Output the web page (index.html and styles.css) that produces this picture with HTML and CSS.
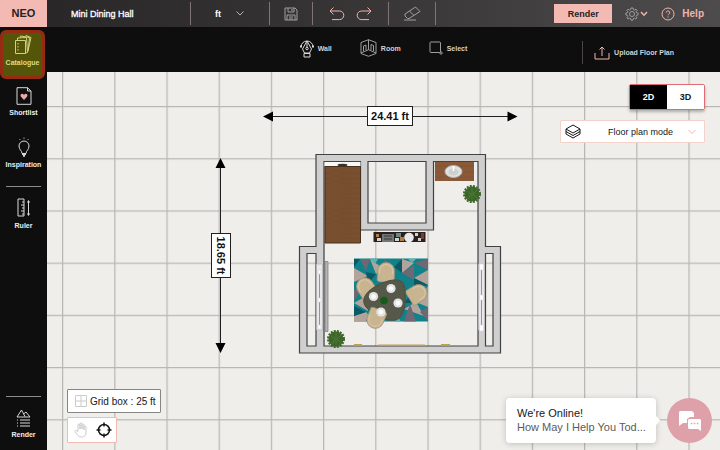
FILE: index.html
```
<!DOCTYPE html>
<html lang="en">
<head>
<meta charset="utf-8">
<title>Mini Dining Hall – NEO</title>
<link rel="stylesheet" href="styles.css">
</head>
<body>
<div class="app">
  <header class="topbar">
    <a class="brand" href="#">NEO</a>
    <h1 class="title">Mini Dining Hall</h1>
    <label class="unit">
      <select aria-label="Unit"><option>ft</option><option>m</option></select>
      <svg class="unit-arrow" width="8" height="5" viewBox="0 0 8 5"><path d="M.5.5 4 4 7.500.5"/></svg>
    </label>
    <div class="group save">
      <button aria-label="Save"><svg width="14" height="14" viewBox="0 0 14 14" class="ln grey"><path d="M1 1h10l2 2v10H1zM4 1v4h6V1M8 2v2M3 13V8h8v5M5 10h4M5 12h4"/></svg></button>
    </div>
    <div class="group history">
      <button aria-label="Undo"><svg width="16" height="14" viewBox="0 0 16 14" class="ln pink"><path d="M4.500.5 1 4l3.500 3.500M1 4h9.500a4.300 4.300 0 0 1 0 8.600H3"/></svg></button>
      <button aria-label="Redo"><svg width="16" height="14" viewBox="0 0 16 14" class="ln pink"><path d="M11.500.5 15 4l-3.500 3.500M15 4H5.500a4.300 4.300 0 0 0 0 8.600H13"/></svg></button>
    </div>
    <div class="group erase">
      <button aria-label="Erase"><svg width="18" height="15" viewBox="0 0 18 15" class="ln grey"><path d="M2 8 12.500 1l4.500 4.500L6 12.500H4.500L2 10zM6.500 5l4.500 4.500M1 14h12"/></svg></button>
    </div>
    <div class="account">
      <button class="render">Render</button>
      <button class="settings" aria-label="Settings">
        <svg width="14" height="14" viewBox="0 0 14 14" class="ln grey"><path d="M6 1h2l.4 1.600 1.200.5L11 2.200 12 3.300l-.9 1.400.5 1.100 1.500.3v1.800l-1.500.4-.5 1.200.9 1.300-1.200 1.200-1.300-.9-1.200.5L8 13.100H6l-.4-1.500-1.200-.5-1.300.9L1.900 10.800l.9-1.300-.5-1.200L.8 7.900V6.100l1.500-.3.5-1.100L2 3.300 3.100 2.200l1.300.9 1.200-.5z"/><circle cx="7" cy="7" r="2.500"/></svg>
        <svg width="8" height="6" viewBox="0 0 8 6" class="ln pink thick"><path d="M1 1 4 4.200 7 1"/></svg>
      </button>
      <a class="help" href="#">
        <svg width="14" height="14" viewBox="0 0 14 14" class="ln pink"><circle cx="7" cy="7" r="6"/><path d="M5.300 5.600a1.700 1.700 0 1 1 2.500 1.500c-.6.3-.8.6-.8 1.200M7 9.500v1"/></svg>
        Help
      </a>
    </div>
  </header>

  <nav class="sidebar">
    <a class="item active" href="#">
      <svg width="18" height="20" viewBox="0 0 18 20" class="ln lime"><path d="M1.500 5.500h10v13h-10zM3.500 5.500V3l9-.5 1 15-2 .5M6 2.500 6.500 1l9 1.500-1.500 14M11 1.500l1-1 5 2-3 13"/><path stroke-dasharray="1.500 1.500" d="M4 8v9"/></svg>
      Catalogue
    </a>
    <a class="item" href="#">
      <svg width="16" height="18" viewBox="0 0 16 18" class="ln white"><path d="M1 .7h10.500L15 4v13.300H1zM11.500.7V4H15"/><path class="heart" d="M8 13 5 9.800C3.800 8.400 5 6.500 6.600 6.800 7.300 7 7.700 7.400 8 8c.3-.6.7-1 1.400-1.200 1.600-.3 2.800 1.600 1.600 3z"/></svg>
      Shortlist
    </a>
    <a class="item" href="#">
      <svg width="14" height="20" viewBox="0 0 14 20" class="ln white"><path d="M5 16.500c0-3-3-3.500-3-7.500a5 5 0 0 1 10 0c0 4-3 4.500-3 7.500z"/><path d="M5 17h4M6 18.800h2" stroke-width="1.800"/><path class="spark" d="m2.500 2 .8 1M7 .5V2m4.500 0-.8 1"/></svg>
      Inspiration
    </a>
    <a class="item ruled" href="#">
      <svg width="14" height="20" viewBox="0 0 14 20" class="ln white"><path d="M1 1h6v17H1zM7 4H5M7 7H4M7 10H5M7 13H4M7 16H5M11.500 3v14M10.500 4.500l1-2 1 2M10.500 15.500l1 2 1-2"/></svg>
      Ruler
    </a>
    <a class="item ruled last" href="#">
      <svg width="16" height="18" viewBox="0 0 16 18" class="ln white"><path d="m1 8 4.500-7L9 7.500M7.500 5 10 3l4 5H1"/><path d="M4 11h10M4 14h10M4 17h10M1 11h1M1 14h1M1 17h1"/></svg>
      Render
    </a>
  </nav>

  <div class="toolbar">
    <div class="tools">
      <button><svg width="14" height="20" viewBox="0 0 14 20" class="ln white"><path d="M1 9a6 6 0 0 1 12 0M7 3 2.500 11l2 4h5l2-4zM7 3v7M4 15.500h6V19H4z"/><circle cx="7" cy="10.500" r="1.200"/><path stroke-width="2" d="M0 8.500h2M12 8.500h2"/></svg>Wall</button>
      <button><svg width="17" height="18" viewBox="0 0 17 18" class="ln grey"><path d="m1 3.500 7.500-2.800L16 3.500v11l-7.500 2.800L1 14.500zM8.500.7v10M1 14l7.500-3.300L16 14M3.500 12V7l2.500-1v5M11 11V5.500L13.500 6.500V12"/></svg>Room</button>
      <button><svg width="14" height="14" viewBox="0 0 14 14" class="ln grey"><rect x="1" y="1" width="10.500" height="10.500" rx="1"/><circle cx="12" cy="12" r="1.200"/></svg>Select</button>
    </div>
    <button class="upload"><svg width="16" height="14" viewBox="0 0 16 14" class="ln pink"><path d="M1 7v6h14V7M8 10V1M5.500 3.500 8 1l2.500 2.500"/></svg>Upload Floor Plan</button>
  </div>

  <main class="canvas">
    <svg class="plan" viewBox="47 72 673 378" preserveAspectRatio="xMinYMin slice">
      <defs>
        <pattern id="grid" x="62" y="106" width="52.200" height="52.200" patternUnits="userSpaceOnUse"><path d="M.6 0v52.200M0 .6h52.200" stroke="#b9b8b3" stroke-width="1.300"/></pattern>
        <pattern id="wood" width="30" height="5" patternUnits="userSpaceOnUse"><path fill="#79502f" d="M0 0h30v5H0z"/><path d="M0 1h22M8 3.500h22" stroke="#72492b" stroke-width=".6"/></pattern>
        <g id="chair"><path fill="#c9b491" stroke="#a39274" stroke-width=".7" d="M-8.500 8V-2A8.500 8.500 0 0 1 8.500-2V8L6 9H-6z"/><path fill="none" stroke="#d8c6a4" d="M-6.500 1v-3a6.500 6.500 0 0 1 13 0v3"/></g>
        <g id="bush"><circle r="7.500" fill="#3d662b"/><circle r="8" fill="none" stroke="#3d662b" stroke-width="2" stroke-dasharray="2 1.200"/><path d="m-5-3 4 3-3 5M5-4 1 0l4 4M0-6V5" stroke="#4f7b39" fill="none"/></g>
        <g id="plate"><circle r="4.600" fill="#e6e7e3"/><circle r="3" fill="#fafafa" stroke="#c9cbc8" stroke-width=".5"/></g>
      </defs>
      <path fill="url(#grid)" d="M47 72h1400v1000H47z"/>

      <g class="dimension">
        <path d="M270 116.500h240M220.500 165v181"/>
        <path class="tip" d="m263 116.500 10-5v10zM517.500 116.500l-10-5v10zM220.500 158l-5 10h10zM220.500 353l-5-10h10z"/>
        <rect x="367.500" y="106.500" width="45" height="19"/>
        <rect x="211.500" y="233.500" width="19" height="44"/>
        <text x="390" y="120">24.41 ft</text>
        <text transform="translate(217 255.500) rotate(90)">18.65 ft</text>
      </g>

      <path class="wall" fill-rule="evenodd" d="M316 154.500H485.500V246.500H500.500V353H299.500V246.500H316zM324 161.500H360.500V230H433.500V161.500H478V346H324zM368 161.500H426V223H368zM307 253.500H316V346H307zM485.500 253.500H493V346H485.500z"/>

      <path fill="#f8f8f5" d="M324.500 162h36v4h-36z"/><ellipse cx="342.500" cy="165" rx="5" ry="1.200" fill="#343434"/>
      <path fill="url(#wood)" stroke="#49301e" d="M325 166.500h35.500v76.500H325z"/>
      <path fill="#8a5938" d="M435 162h39v19h-39z"/><path stroke="#7d5032" stroke-width=".6" d="M435 166h39M435 172h39M435 177h39"/>
      <ellipse cx="453.500" cy="171.500" rx="8.500" ry="6" fill="#e1e2e0" stroke="#b7b7b5"/><ellipse cx="453.500" cy="172" rx="5" ry="3.500" fill="#cfd0ce"/><path stroke="#fff" stroke-width="1.500" d="M453.500 166v5"/>
      <use href="#bush" x="472" y="194"/>

      <path fill="#2a211e" d="M373.500 232h52v10h-52z"/>
      <path fill="#737677" d="M382 234h12v8h-12z"/><path stroke="#373a3b" d="M384 236h8M384 239h8"/>
      <path fill="#638a87" d="M396 233h5v4h-5z"/><path fill="#b77945" d="M400 237h4v4h-4zM376 234h3v3h-3z"/><path fill="#d7d2c8" d="M377 238h4v3h-4zM395 238h4v3h-4zM415 233h3v3h-3zM418 238h3v3h-3z"/><circle cx="409" cy="237.500" r="4.800" fill="#e8e9e8"/><path fill="#763e38" d="M421 233h3v6h-3z"/>

      <path fill="#12828a" d="M354 258.500h74V321.500h-74z"/>
      <path fill="#b3a49b" d="m354 268 14 8-14 6zM370 259l14 10-8 5zM402 259l12 4-12 10zM428 270l-14 8 14 7zM354 303l14-8v16zM404 309l12-7 8 14zM428 291l-10 12 10 4zM354 316l12-4 8 9.500h-20z"/>
      <path fill="#6e6874" d="m360 259 10 0-4 12zM384 259l10 8-8 4zM414 263l14-4v11zM354 290l10-4-10 15zM402 273l12-8v15zM410 304l6 17.500h-12zM428 307v14l-8-9z"/>
      <path fill="#0a5964" d="m354 259 6 0-6 8zM376 274l-8 10-2-12zM394 267l8-8v14zM414 278l14 7-14 3zM354 306l12 6-12 4zM418 303l-14 0 8-10zM366 321l4-9 8 9.500z"/>
      <path fill="#5fb1b2" d="m370 259 8 0-3 5zM408 259h8l-4 4zM428 286v5l-9 7zM357 284l7-3-2 8zM389 321l8-5 4 5.500z"/>
      <use href="#chair" transform="translate(386 273) rotate(3)"/>
      <use href="#chair" transform="translate(366 288) rotate(-32)"/>
      <use href="#chair" transform="translate(417 294) rotate(58)"/>
      <path fill="#56594a" stroke="#4b4e3f" d="M388 281c12-3 17 0 17 11 1 13-1 25-9 28-8 2-23-4-30-13-7-9 3-20 22-26z"/>
      <use href="#chair" transform="translate(376 318) rotate(202)"/>
      <use href="#plate" x="391" y="288.500"/><use href="#plate" x="373.500" y="296.500"/><use href="#plate" x="398" y="303"/><use href="#plate" x="381" y="312"/>
      <circle cx="384" cy="300.500" r="3.800" fill="#145c17"/>

      <g class="window">
        <path d="M316.500 264h6v66h-6zM478.500 264h6v66h-6z"/>
        <path class="pane" d="M319.500 271v56M481.500 267v62"/>
        <path class="knob" d="M479.500 264h4v6h-4zM479.500 295h4v5h-4zM479.500 325h4v6h-4zM318 270h3v4h-3zM318 298h3v4h-3zM318 325h3v4h-3z"/>
        <path class="curtain" d="M325 261.500h3v70h-3z"/>
      </g>
      <use href="#bush" x="336" y="339"/>
      <path fill="#bda050" d="M378 344.500h47v1.500h-47zM354 344h8v2h-8zM441 344h9v2h-9z"/>
    </svg>

    <div class="view">
      <div class="dims"><button class="on">2D</button><button>3D</button></div>
      <label class="mode">
        <svg width="16" height="15" viewBox="0 0 16 15" class="ln black"><path d="m1 5 7-4 7 4-7 4zM1 7.500l7 4 7-4M1 10l7 4 7-4M1 5v5M15 5v5"/></svg>
        <select aria-label="Mode"><option>Floor plan mode</option></select>
        <svg width="8" height="6" viewBox="0 0 8 6" class="ln pink"><path d="M.5 1 4 4.500 7.500 1"/></svg>
      </label>
    </div>

    <div class="status">
      <div class="gridbox"><svg width="12" height="12" viewBox="0 0 12 12" class="ln faint"><path d="M.5.5h11v11H.5zM6 .5v11M.5 6h11"/></svg>Grid box : 25 ft</div>
      <div class="pointer">
        <button aria-label="Pan"><svg width="14" height="16" viewBox="0 0 14 16" class="ln faint"><path d="M4 9V3a1 1 0 0 1 2 0v4V2a1 1 0 0 1 2 0v5V3a1 1 0 0 1 2 0v5V5a1 1 0 0 1 2 0v5c0 3-1 5-4.500 5C4 15 3.500 13 1 9.500 1 8 3 8 4 10"/></svg></button>
        <button aria-label="Center"><svg width="16" height="16" viewBox="0 0 16 16" class="ln black thick"><circle cx="8" cy="8" r="5.500"/><path d="M8 .5v4M8 11.500v4M.5 8h4M11.500 8h4"/></svg></button>
      </div>
    </div>

    <div class="chat">
      <div class="bubble"><strong>We're Online!</strong><p>How May I Help You Tod...</p></div>
      <button class="chat-button" aria-label="Chat"><svg width="24" height="22" viewBox="0 0 24 22"><path fill="#fff" d="M2 1h12l2 2v4h-4L9 9v4H5l-4 3V2z"/><path fill="#fff" d="M11 9h11l1 1v11l-3-2h-9l-1-1v-8z"/><path stroke="#dfa1a9" stroke-width="1.500" stroke-dasharray="1.500 1.500" d="M12.800 13.500h8"/></svg></button>
    </div>
  </main>
</div>
</body>
</html>
```
FILE: styles.css
```
* { box-sizing: border-box; }
body { margin: 0; font-family: "Liberation Sans", Arial, sans-serif; color: #171717; }
button, select { font: inherit; color: inherit; border: 0; background: none; padding: 0; margin: 0; appearance: none; cursor: pointer; }
a { color: inherit; text-decoration: none; }
svg { display: block; flex: none; }

.ln { fill: none; stroke-width: 1; }
.grey { stroke: #a09e9e; }
.white { stroke: #d8d8d8; }
.pink { stroke: #eeb5ad; }
.lime { stroke: #d1d27c; }
.black { stroke: #151515; }
.faint { stroke: #cccaca; }
.thick { stroke-width: 1.5; }
.heart { fill: #e9a9a6; stroke: none; }
.spark { stroke: #d98c80; }

.app { display: grid; grid-template: "top top" 27px "side tools" 45px "side canvas" 1fr / 47px 1fr; min-height: 100vh; }

.topbar { grid-area: top; display: flex; align-items: center; color: #fff; background: linear-gradient(90deg, #272526, #373536 50%, #4e4b4c); }
.brand { width: 47px; line-height: 27px; text-align: center; font-size: 11px; font-weight: bold; background: #f2bab2; color: #272122; }
.title { margin: 0; width: 143px; padding-left: 24px; font-size: 9px; font-weight: normal; -webkit-text-stroke: 0.3px; }
.unit, .group { display: flex; align-items: center; justify-content: space-evenly; height: 23px; border-left: 1px solid #827476; }
.unit { width: 79px; position: relative; font-size: 9px; font-weight: bold; }
.unit select { width: 100%; height: 23px; padding-left: 24px; }
.unit option { color: #171717; }
.unit-arrow { position: absolute; right: 25px; fill: none; stroke: #b5b5b5; pointer-events: none; }
.save { width: 43px; }
.history { width: 76px; padding: 0 6px; }
.erase { width: 48px; border-right: 1px solid #827476; }
.account { display: flex; align-items: center; margin-left: auto; padding-right: 16px; }
.render { width: 58px; height: 19px; background: #f2bab2; color: #272122; font-size: 9px; font-weight: bold; }
.settings { display: flex; align-items: center; gap: 1px; margin: 0 13px; }
.help { display: flex; align-items: center; gap: 7px; color: #eeb5ad; font-size: 10px; font-weight: bold; }

.sidebar { grid-area: side; display: flex; flex-direction: column; background: #0e0e0e; color: #eee; font-size: 7px; font-weight: bold; padding-top: 3px; }
.item { display: flex; flex-direction: column; align-items: center; justify-content: center; gap: 4px; height: 51px; padding-bottom: 6px; }
.item.active { width: 45px; height: 49px; padding-bottom: 8px; background: #545509; border: 3px solid #962b14; border-radius: 6px; color: #dbdc8d; }
.item.ruled { width: 35px; height: 54px; margin: 5px auto 0; padding-top: 5px; border-top: 1px solid #8d8d8d; }
.item.last { margin-top: auto; }

.toolbar { grid-area: tools; display: grid; grid-template-columns: 1fr auto 1fr; align-items: center; background: #0e0e0e; color: #d3d3d3; font-size: 7px; font-weight: bold; }
.tools { grid-column: 2; display: flex; gap: 28px; padding-bottom: 3px; }
.toolbar button { display: flex; align-items: center; gap: 4px; }
.toolbar .upload { justify-self: end; height: 23px; margin: 6px 46px 0 0; padding-left: 11px; border-left: 1px solid #4b4546; }

.canvas { grid-area: canvas; position: relative; display: flex; flex-direction: column; justify-content: space-between; background: #efeeea; overflow: hidden; }
.plan { position: absolute; inset: 0; width: 100%; height: 100%; }
.dimension { fill: #fff; stroke: #202020; }
.dimension .tip { fill: #000; stroke: none; }
.dimension text { fill: #111; stroke: none; font-size: 11px; font-weight: bold; text-anchor: middle; }
.wall { fill: #cfcfcf; stroke: #424244; stroke-width: 1.2; }
.window { fill: #e8e8ea; stroke: #b4b4b8; stroke-width: 0.7; }
.window .pane { stroke: #94949a; stroke-width: 1; }
.window .knob { fill: #fff; stroke: #d8d8d8; }
.window .curtain { fill: #b5b5b6; stroke: #77777a; }

.view { position: relative; align-self: flex-end; display: flex; flex-direction: column; align-items: flex-end; gap: 10px; padding: 12px 15px 0; }
.dims { display: flex; border: 1px solid #df6b75; border-radius: 2px; box-shadow: 0 2px 3px #0004; font-size: 9px; font-weight: bold; }
.dims button { width: 37px; height: 24px; background: #fff; }
.dims .on { background: #000; color: #fff; }
.mode { display: flex; align-items: center; width: 145px; height: 23px; padding: 0 8px 0 4px; background: #fff; border: 1px solid #f3d2cb; border-radius: 1px; font-size: 9px; }
.mode select { flex: 1; text-align-last: center; padding-left: 12px; height: 20px; }

.status { position: relative; display: flex; flex-direction: column; align-items: flex-start; gap: 4px; padding: 0 0 7px 20px; }
.gridbox { display: flex; align-items: center; gap: 3px; height: 24px; padding: 0 4px 0 7px; background: #fff; border: 1px solid #858585; border-radius: 1px; font-size: 10px; }
.pointer { display: flex; align-items: center; gap: 8px; height: 26px; padding: 0 4px 0 6px; background: #fff; border: 1px solid #f2bab2; border-radius: 1px; }

.chat { position: absolute; right: 8px; bottom: 7px; display: flex; align-items: center; gap: 11px; }
.bubble { position: relative; width: 150px; height: 45px; padding: 8px 11px; border-radius: 4px; background: #fff; box-shadow: 0 1px 6px #0003; font-size: 11px; line-height: 14px; }
.bubble::after { content: ""; position: absolute; right: -3px; top: 19px; width: 7px; height: 7px; background: #fff; transform: rotate(45deg); }
.bubble strong { display: block; font-weight: normal; }
.bubble p { margin: 0; color: #5b5b5b; white-space: nowrap; }
.chat-button { display: grid; place-items: center; width: 45px; height: 45px; border-radius: 50%; background: #dfa1a9; }
```
